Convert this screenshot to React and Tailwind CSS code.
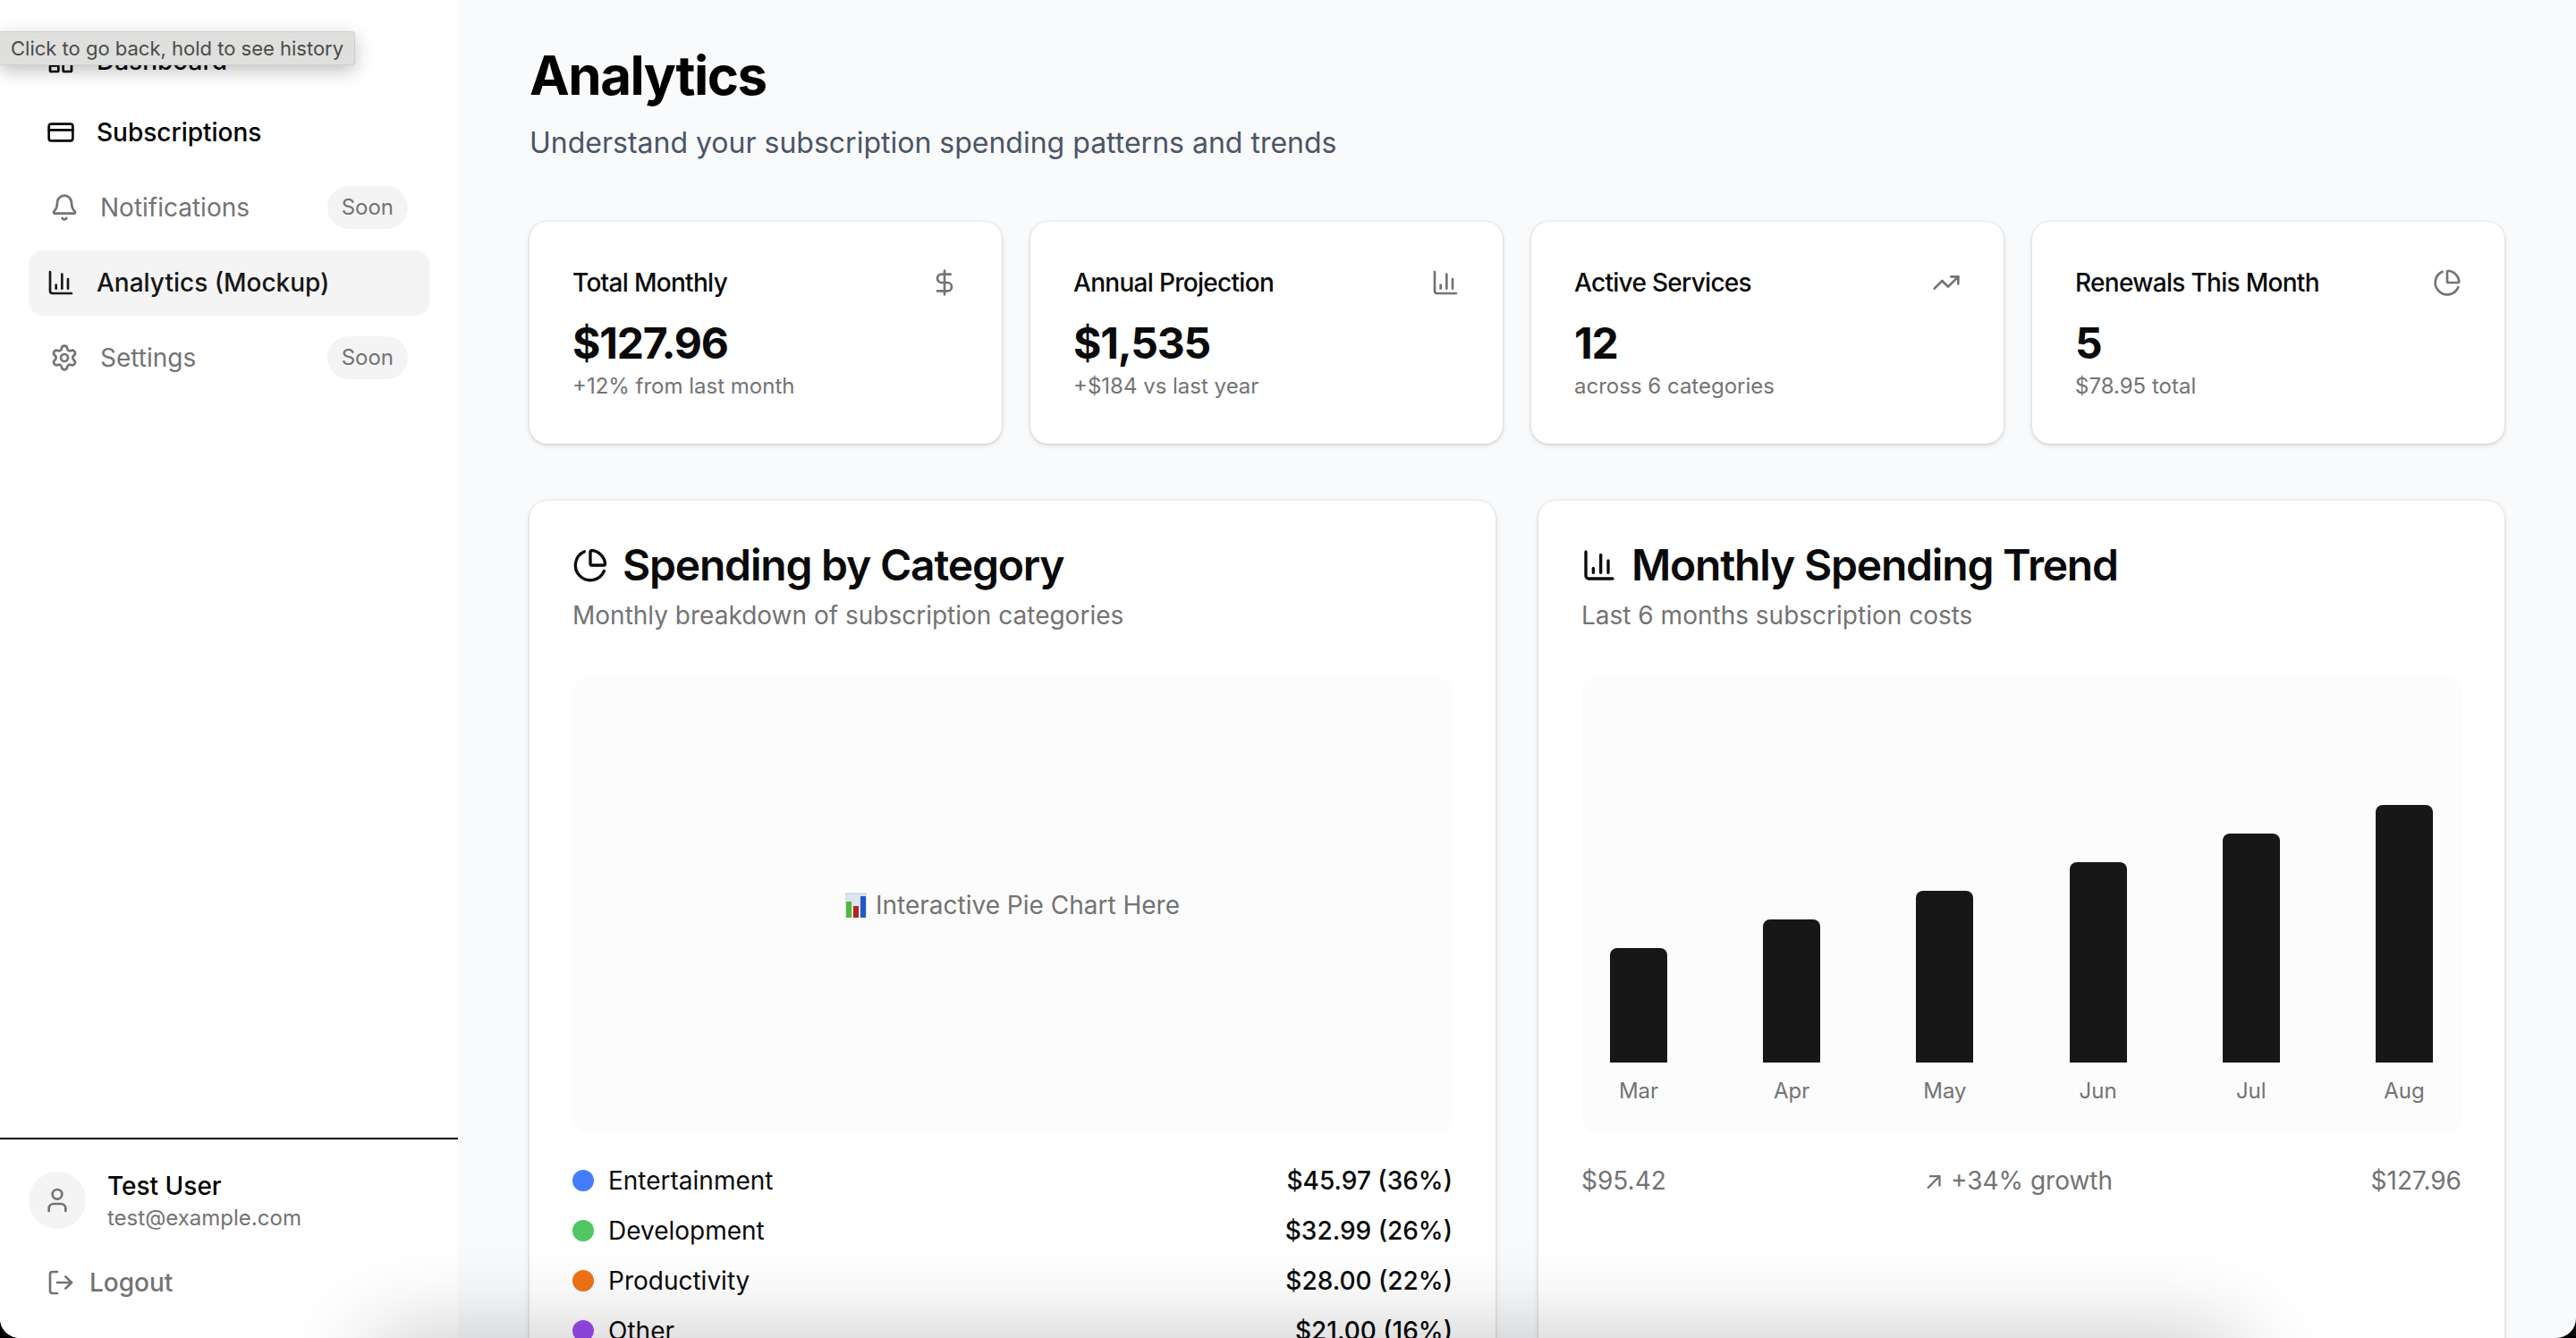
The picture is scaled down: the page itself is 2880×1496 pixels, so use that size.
import React from "react";
import {
  LayoutDashboard,
  CreditCard,
  Bell,
  Settings,
  User,
  LogOut,
  DollarSign,
  TrendingUp,
  ChartColumn,
  ChartPie,
} from "lucide-react";

function ChartEmoji({ className }) {
  return (
    <svg viewBox="0 0 24 28" className={className} aria-hidden="true">
      <rect width="24" height="28" fill="#dce4ee" />
      <rect y="1" width="24" height="1" fill="#c9d2dd" />
      <rect x="1" y="10" width="6" height="18" fill="#52b83a" />
      <rect x="9" y="15" width="6" height="13" fill="#b3241d" />
      <rect x="17" y="4" width="6" height="24" fill="#2458c0" />
    </svg>
  );
}

const nav = [
  { label: "Dashboard", icon: LayoutDashboard },
  { label: "Subscriptions", icon: CreditCard },
  { label: "Notifications", icon: Bell, soon: true },
  { label: "Analytics (Mockup)", icon: ChartColumn, active: true },
  { label: "Settings", icon: Settings, soon: true },
];

const stats = [
  { title: "Total Monthly", value: "$127.96", note: "+12% from last month", icon: DollarSign },
  { title: "Annual Projection", value: "$1,535", note: "+$184 vs last year", icon: ChartColumn },
  { title: "Active Services", value: "12", note: "across 6 categories", icon: TrendingUp },
  { title: "Renewals This Month", value: "5", note: "$78.95 total", icon: ChartPie },
];

const categories = [
  { name: "Entertainment", amount: "$45.97 (36%)", dot: "bg-[#447dfc]" },
  { name: "Development", amount: "$32.99 (26%)", dot: "bg-[#50c760]" },
  { name: "Productivity", amount: "$28.00 (22%)", dot: "bg-[#f07316]" },
  { name: "Other", amount: "$21.00 (16%)", dot: "bg-[#9b4bf2]" },
];

const months = [
  { name: "Mar", height: 128 },
  { name: "Apr", height: 160 },
  { name: "May", height: 192 },
  { name: "Jun", height: 224 },
  { name: "Jul", height: 256 },
  { name: "Aug", height: 288 },
];

function NavItem({ label, icon: Icon, soon, active }) {
  if (soon) {
    return (
      <div className="flex h-20 items-center gap-6 px-6 text-[28px] text-[#737373]">
        <Icon className="size-8 shrink-0" />
        <span className="flex-1">{label}</span>
        <span className="flex h-12 items-center rounded-full bg-[#f4f4f4] px-4 text-2xl">Soon</span>
      </div>
    );
  }
  return (
    <a
      href="#"
      className={
        active
          ? "flex h-18 items-center gap-6 rounded-2xl bg-[#f4f4f4] px-5 text-[28px] font-medium text-[#171717] shadow-xs"
          : "flex h-18 items-center gap-6 rounded-2xl px-5 text-[28px] font-medium text-black"
      }
    >
      <Icon className="size-8 shrink-0" />
      {label}
    </a>
  );
}

const card =
  "rounded-[20px] bg-white p-12 text-[#0a0a0a] shadow-[0_0_0_2px_rgba(0,0,0,0.03),0_2px_6px_rgba(0,0,0,0.1),0_2px_4px_-2px_rgba(0,0,0,0.1)]";

export default function App() {
  return (
    <div className="h-screen bg-black font-['Inter','Liberation_Sans',sans-serif]">
      <div className="relative flex h-full overflow-hidden rounded-b-[22px] bg-[#f9fafc]">
        <aside className="flex w-128 shrink-0 flex-col bg-white">
          <nav className="flex flex-col gap-2 px-8 pt-8">
            {nav.map((item) => (
              <NavItem key={item.label} {...item} />
            ))}
          </nav>
          <div className="mt-auto border-t-2 border-black px-8 pt-8 pb-[30px]">
            <div className="flex items-center gap-6">
              <div className="flex size-16 items-center justify-center rounded-full bg-[#f4f4f4] text-[#737373]">
                <User className="size-8" />
              </div>
              <div>
                <p className="text-[28px] leading-10 font-medium text-black">Test User</p>
                <p className="text-2xl leading-8 text-[#737373]">test@example.com</p>
              </div>
            </div>
            <button
              type="button"
              className="mt-6 flex h-16 w-full items-center gap-4 px-5 text-[28px] font-medium text-[#737373]"
            >
              <LogOut className="size-8" />
              Logout
            </button>
          </div>
        </aside>

        <main className="min-w-0 flex-1 overflow-hidden px-20 pt-12">
          <h1 className="text-6xl leading-[72px] font-bold tracking-tight text-black">Analytics</h1>
          <p className="mt-4 text-[32px] leading-12 text-[#4a5565]">
            Understand your subscription spending patterns and trends
          </p>

          <section className="mt-16 grid grid-cols-4 gap-8">
            {stats.map(({ title, value, note, icon: Icon }) => (
              <div key={title} className={card}>
                <div className="flex items-center justify-between">
                  <h3 className="text-[28px] leading-10 font-medium tracking-tight">{title}</h3>
                  <Icon className="size-8 text-[#737373]" />
                </div>
                <p className="mt-4 text-5xl leading-16 font-bold tracking-tight">{value}</p>
                <p className="text-2xl leading-8 text-[#737373]">{note}</p>
              </div>
            ))}
          </section>

          <section className="mt-16 grid grid-cols-2 gap-12">
            <div className={card}>
              <h2 className="flex items-center gap-4 text-5xl leading-12 font-semibold tracking-tight">
                <ChartPie className="size-10" />
                Spending by Category
              </h2>
              <p className="mt-3 text-[28px] leading-10 text-[#737373]">
                Monthly breakdown of subscription categories
              </p>
              <div className="mt-12 flex h-128 items-center justify-center gap-2.5 rounded-[20px] bg-[#fcfcfc] text-[28px] text-[#737373]">
                <ChartEmoji className="h-7 w-6" />
                Interactive Pie Chart Here
              </div>
              <ul className="mt-8 flex flex-col gap-4">
                {categories.map((c) => (
                  <li key={c.name} className="flex items-center gap-4 text-[28px] leading-10">
                    <span className={`size-6 rounded-full ${c.dot}`} />
                    <span className="flex-1">{c.name}</span>
                    <span className="font-medium">{c.amount}</span>
                  </li>
                ))}
              </ul>
            </div>

            <div className={card}>
              <h2 className="flex items-center gap-4 text-5xl leading-12 font-semibold tracking-tight">
                <ChartColumn className="size-10" />
                Monthly Spending Trend
              </h2>
              <p className="mt-3 text-[28px] leading-10 text-[#737373]">Last 6 months subscription costs</p>
              <div className="mt-12 flex h-128 items-end justify-between rounded-[20px] bg-[#fcfcfc] p-8">
                {months.map((m) => (
                  <div key={m.name} className="flex w-16 flex-col items-center gap-4">
                    <div className="w-16 rounded-t-lg bg-[#171717]" style={{ height: m.height }} />
                    <span className="text-2xl leading-8 text-[#737373]">{m.name}</span>
                  </div>
                ))}
              </div>
              <div className="mt-8 flex justify-between text-[28px] leading-10 text-[#737373]">
                <span>$95.42</span>
                <span>↗ +34% growth</span>
                <span>$127.96</span>
              </div>
            </div>
          </section>
        </main>

        <div
          role="tooltip"
          className="absolute top-[35px] left-0 rounded-r-sm border border-l-0 border-[#cfcfce] bg-[#dfdfde] px-3 text-[22px] leading-9 text-[#4b4b4a] shadow-[0_6px_20px_rgba(0,0,0,0.25)]"
        >
          Click to go back, hold to see history
        </div>

        <div className="pointer-events-none absolute -bottom-20 left-[410px] right-[370px] h-20 rounded-[40px] shadow-[0_0_100px_rgba(0,0,0,0.25)]" />
      </div>
    </div>
  );
}
